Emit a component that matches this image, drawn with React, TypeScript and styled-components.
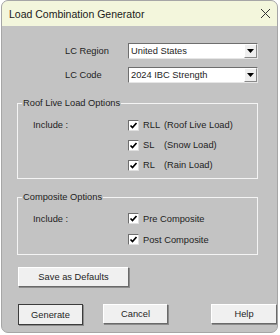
import styled, { createGlobalStyle } from "styled-components";

const GlobalStyle = createGlobalStyle`
  body {
    margin: 0;
    background: #ffffff;
    font-family: "Liberation Sans", Arial, sans-serif;
  }
`;

const Window = styled.div`
  margin-left: 1px;
  width: 277px;
  height: 333px;
  box-sizing: border-box;
  border: 1px solid #a6a6a6;
  border-radius: 7px;
  overflow: hidden;
  background: #c3c3c3;
  display: flex;
  flex-direction: column;
`;

const TitleBar = styled.div`
  height: 25px;
  flex: none;
  background: #f3f6dc;
  display: flex;
  align-items: center;
  justify-content: space-between;
  padding: 0 6px 0 7px;
  font-size: 10.5px;
  color: #1a1a1a;
`;

const Body = styled.div`
  padding: 17px 0 0 15px;
  font-size: 9.3px;
  color: #1e1e1e;
  display: flex;
  flex-direction: column;
`;

const FormRow = styled.div`
  display: flex;
  align-items: center;
  padding-left: 48px;
  margin-bottom: 8px;
`;

const FieldLabel = styled.span`
  width: 63px;
`;

const Select = styled.div`
  width: 130px;
  height: 16px;
  box-sizing: border-box;
  background: #ffffff;
  border: 1px solid;
  border-color: #6e6e6e #e6e6e6 #e6e6e6 #6e6e6e;
  display: flex;
  align-items: center;
  justify-content: space-between;
  padding-left: 2px;
`;

const DropButton = styled.div`
  width: 13px;
  height: 14px;
  box-sizing: border-box;
  background: #efefef;
  border: 1px solid;
  border-color: #ffffff #8a8a8a #8a8a8a #ffffff;
  display: flex;
  align-items: center;
  justify-content: center;
`;

const Group = styled.div<{ $top: number; $padTop: number; $padBottom: number }>`
  position: relative;
  width: 241px;
  box-sizing: border-box;
  margin-top: ${(p) => p.$top}px;
  border: 1px solid #f4f4f4;
  padding: ${(p) => p.$padTop}px 0 ${(p) => p.$padBottom}px 15px;
  display: flex;
`;

const Legend = styled.span`
  position: absolute;
  top: -7px;
  left: 4px;
  padding: 0 1px;
  background: #c3c3c3;
  line-height: 12px;
`;

const IncludeLabel = styled.div<{ $row: number }>`
  width: 95px;
  height: ${(p) => p.$row}px;
  display: flex;
  align-items: center;
`;

const CheckList = styled.div`
  display: flex;
  flex-direction: column;
`;

const CheckRow = styled.div<{ $row: number }>`
  height: ${(p) => p.$row}px;
  display: flex;
  align-items: center;
  gap: 4px;
`;

const Box = styled.span`
  width: 11px;
  height: 11px;
  box-sizing: border-box;
  background: #ffffff;
  border: 1px solid;
  border-color: #6e6e6e #e0e0e0 #e0e0e0 #6e6e6e;
  display: flex;
  align-items: center;
  justify-content: center;
`;

const Code = styled.span`
  width: 17px;
`;

const Button = styled.button<{ $w: number; $default?: boolean }>`
  width: ${(p) => p.$w}px;
  height: ${(p) => (p.$default ? 21 : 20)}px;
  box-sizing: border-box;
  background: #f0f0f0;
  font-family: "Liberation Sans", Arial, sans-serif;
  font-size: 9.3px;
  color: #1e1e1e;
  padding: 0;
  border: 1px solid;
  border-color: #ffffff #6a6a6a #6a6a6a #ffffff;
  outline: ${(p) => (p.$default ? "1px solid #3c3c3c" : "none")};
  outline-offset: ${(p) => (p.$default ? "-1px" : "0")};
  box-shadow: 1px 1px 0 #8c8c8c;
`;

const SaveRow = styled.div`
  margin: 12px 0 0 1px;
`;

const ButtonBar = styled.div`
  display: flex;
  margin: 17px 0 0 1px;
  gap: 20px;
`;

const Spacer = styled.div`
  width: 3px;
`;

const Check = () => (
  <Box>
    <svg width="9" height="9" viewBox="0 0 9 9">
      <polyline points="1.5,4.5 3.5,6.5 7.5,2" fill="none" stroke="#000" strokeWidth="1.7" />
    </svg>
  </Box>
);

const Arrow = () => (
  <svg width="7" height="4" viewBox="0 0 7 4">
    <polygon points="0,0 7,0 3.5,4" fill="#000" />
  </svg>
);

const roofItems = [
  ["RLL", "(Roof Live Load)"],
  ["SL", "(Snow Load)"],
  ["RL", "(Rain Load)"],
];

export default function App() {
  return (
    <>
      <GlobalStyle />
      <Window>
        <TitleBar>
          <span>Load Combination Generator</span>
          <svg width="11" height="11" viewBox="0 0 11 11">
            <path d="M1 1 L10 10 M10 1 L1 10" stroke="#333" strokeWidth="1" />
          </svg>
        </TitleBar>
        <Body>
          <FormRow>
            <FieldLabel>LC Region</FieldLabel>
            <Select>
              <span>United States</span>
              <DropButton>
                <Arrow />
              </DropButton>
            </Select>
          </FormRow>
          <FormRow>
            <FieldLabel>LC Code</FieldLabel>
            <Select>
              <span>2024 IBC Strength</span>
              <DropButton>
                <Arrow />
              </DropButton>
            </Select>
          </FormRow>

          <Group $top={12} $padTop={11} $padBottom={3}>
            <Legend>Roof Live Load Options</Legend>
            <IncludeLabel $row={20}>Include :</IncludeLabel>
            <CheckList>
              {roofItems.map(([code, name]) => (
                <CheckRow key={code} $row={20}>
                  <Check />
                  <Code>{code}</Code>
                  <span>{name}</span>
                </CheckRow>
              ))}
            </CheckList>
          </Group>

          <Group $top={18} $padTop={10} $padBottom={4}>
            <Legend>Composite Options</Legend>
            <IncludeLabel $row={21}>Include :</IncludeLabel>
            <CheckList>
              <CheckRow $row={21}>
                <Check />
                <span>Pre Composite</span>
              </CheckRow>
              <CheckRow $row={21}>
                <Check />
                <span>Post Composite</span>
              </CheckRow>
            </CheckList>
          </Group>

          <SaveRow>
            <Button $w={111}>Save as Defaults</Button>
          </SaveRow>

          <ButtonBar>
            <Button $w={65} $default>
              Generate
            </Button>
            <Button $w={65}>Cancel</Button>
            <Spacer />
            <Button $w={66}>Help</Button>
          </ButtonBar>
        </Body>
      </Window>
    </>
  );
}
